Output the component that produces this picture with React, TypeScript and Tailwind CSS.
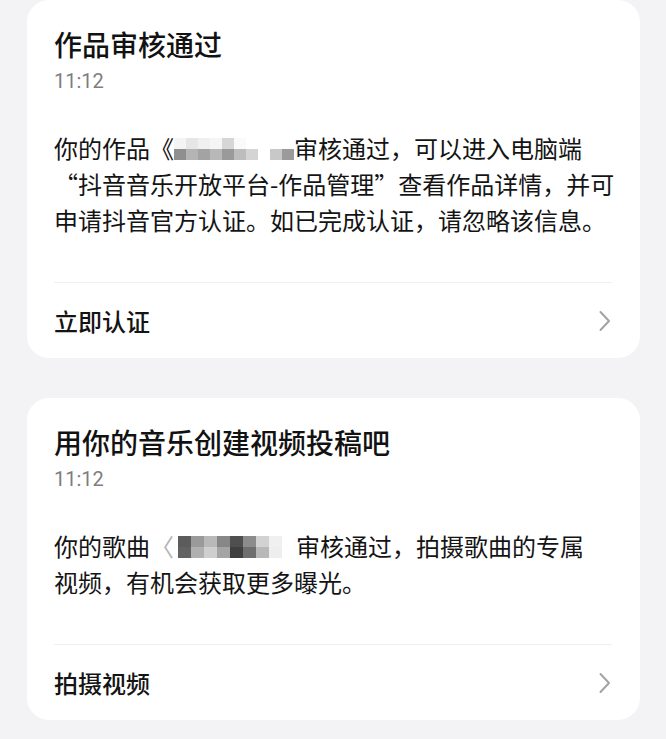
import React from "react";

const FONT = "font-['Noto_Sans_CJK_SC','Noto_Sans',sans-serif]";

// pixelated cover over the work title
const MOSAIC_ONE = [
  ["bg-[#f4f4f4]", "bg-[#e6e6e6]", "bg-[#f0f0f0]", "bg-[#f5f5f5]", "bg-[#d6d6d6]", "bg-[#fafafa]", "bg-[#ffffff]", "bg-[#ffffff]", "bg-[#ffffff]", "bg-[#ffffff]"],
  ["bg-[#8f8f8f]", "bg-[#b4b4b4]", "bg-[#a3a3a3]", "bg-[#b8b8b8]", "bg-[#9a9a9a]", "bg-[#bdbdbd]", "bg-[#d4d4d4]", "bg-[#ffffff]", "bg-[#c8c8c8]", "bg-[#9b9b9b]"],
];

const MOSAIC_TWO = [
  ["bg-[#5c5c5c]", "bg-[#9a9a9a]", "bg-[#b9b9b9]", "bg-[#878787]", "bg-[#4f4f4f]", "bg-[#8c8c8c]", "bg-[#d2d2d2]", "bg-[#f0f0f0]"],
  ["bg-[#626262]", "bg-[#b0b0b0]", "bg-[#cfcfcf]", "bg-[#a4a4a4]", "bg-[#3f3f3f]", "bg-[#6e6e6e]", "bg-[#b8b8b8]", "bg-[#eeeeee]"],
];

const Mosaic = ({ cells, cell }: { cells: string[][]; cell: string }) => (
  <span className="inline-flex flex-col align-middle -mt-1">
    {cells.map((row, i) => (
      <span key={i} className="flex">
        {row.map((c, j) => (
          <span key={j} className={`${cell} ${c}`} />
        ))}
      </span>
    ))}
  </span>
);

const Chevron = () => (
  <svg width="14" height="22" viewBox="0 0 14 22" fill="none">
    <path
      d="M2.5 2 L11 11 L2.5 20"
      stroke="#a3a3a3"
      strokeWidth="2"
      strokeLinecap="round"
      strokeLinejoin="round"
    />
  </svg>
);

type CardProps = {
  title: string;
  time: string;
  action: string;
  children: React.ReactNode;
};

const NoticeCard = ({ title, time, action, children }: CardProps) => (
  <div className="bg-white rounded-[22px] pt-[26px] pl-[27px] pr-[28px]">
    <div className="text-[28px] leading-[36px] font-medium text-[#121212]">{title}</div>
    <div className="mt-[7px] text-[20px] leading-[24px] text-[#7e7e7e] font-['Roboto',sans-serif]">
      {time}
    </div>
    <div className="mt-[37px] text-[24px] leading-[36px] text-[#141414]">{children}</div>
    <div className="mt-[44px] h-px bg-[#efefef]" />
    <div className="h-[75px] flex items-center justify-between">
      <span className="text-[24px] font-medium text-[#141414]">{action}</span>
      <Chevron />
    </div>
  </div>
);

export default function App() {
  return (
    <div className={`${FONT} w-[666px] h-[739px] bg-[#f3f3f5] pl-[27px] pr-[26px] flex flex-col gap-[40px] overflow-hidden`}>
      <NoticeCard title="作品审核通过" time="11:12" action="立即认证">
        <div className="whitespace-nowrap">
          你的作品《
          <Mosaic cells={MOSAIC_ONE} cell="w-[12px] h-[11px]" />
          审核通过，可以进入电脑端
        </div>
        <div className="whitespace-nowrap">“抖音音乐开放平台-作品管理”查看作品详情，并可</div>
        <div className="whitespace-nowrap">申请抖音官方认证。如已完成认证，请忽略该信息。</div>
      </NoticeCard>

      <NoticeCard title="用你的音乐创建视频投稿吧" time="11:12" action="拍摄视频">
        <div className="whitespace-nowrap">
          你的歌曲<span className="text-[#b5b5b5]">〈</span>
          <span className="ml-[4px]">
            <Mosaic cells={MOSAIC_TWO} cell="w-[13px] h-[11px]" />
          </span>
          <span className="ml-[14px]">审核通过，拍摄歌曲的专属</span>
        </div>
        <div className="whitespace-nowrap">视频，有机会获取更多曝光。</div>
      </NoticeCard>
    </div>
  );
}
